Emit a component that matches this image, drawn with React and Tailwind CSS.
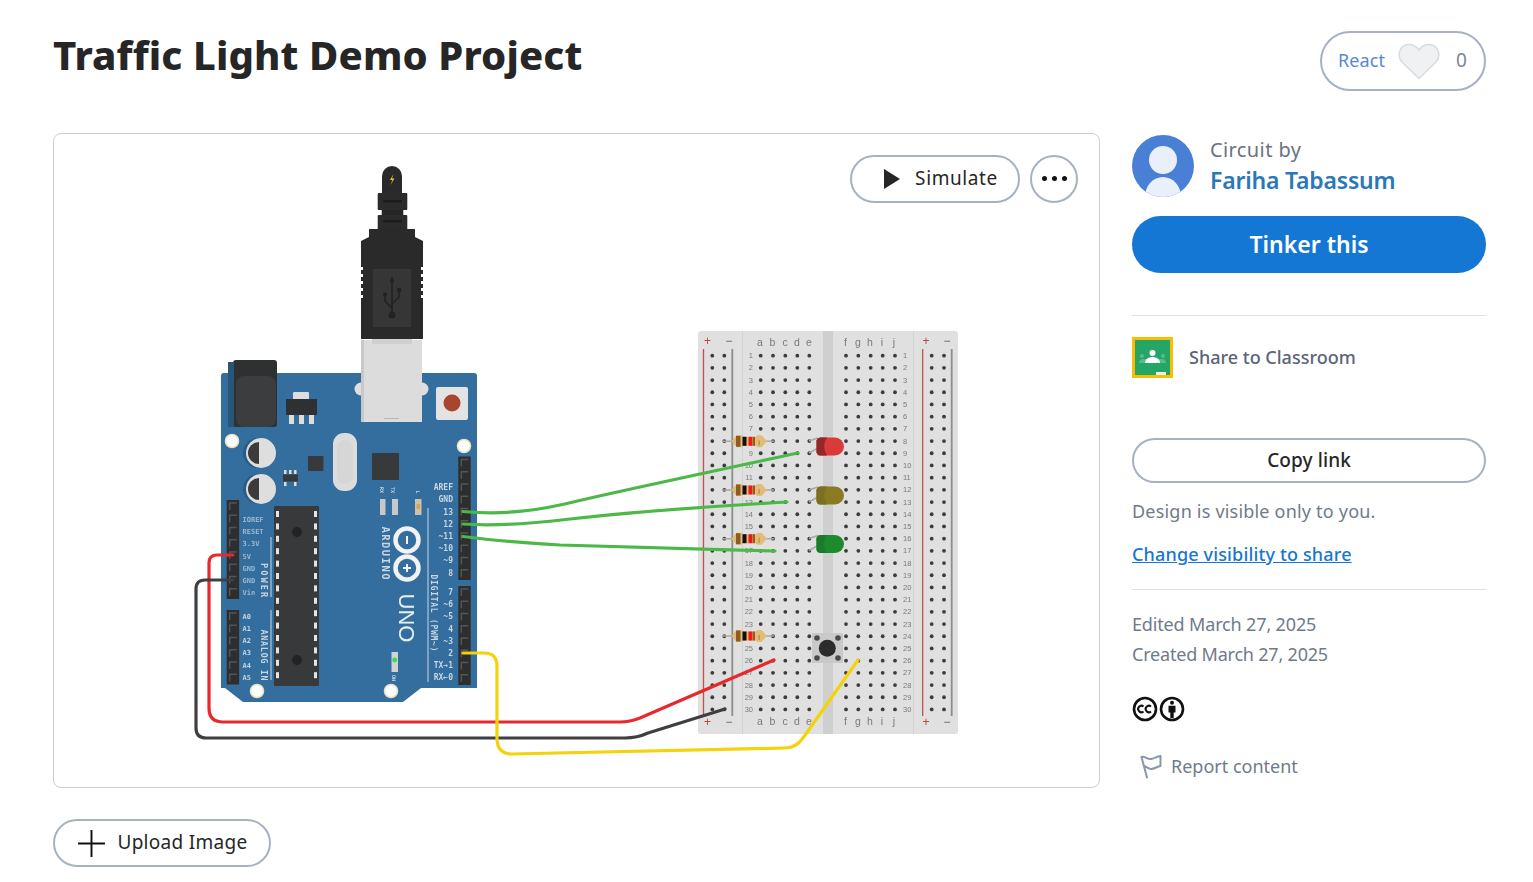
import React from "react";

const rows = Array.from({ length: 30 }, (_, i) => 355.67 + 12.2 * i);
const holeCols = [712.3, 724.3, 760.7, 773, 785.3, 797.3, 809.3, 846, 858.3, 870.7, 882.7, 895, 931.7, 944];

function Resistor({ y }) {
  return (
    <g>
      <path d={`M722 ${y}H774`} stroke="#a8a8a8" strokeWidth="1.6" />
      <path d={`M731.5 ${y}l5-6h5l2 1.500h12l2-1.500h4l5.500 6-5.500 6h-4l-2-1.500h-12l-2 1.500h-5z`} fill="#e2bd78" />
      <rect x="736" y={y - 5.5} width="4.500" height="11" fill="#8f5a24" />
      <rect x="742.5" y={y - 4.5} width="4" height="9" fill="#111" />
      <rect x="748.5" y={y - 4.5} width="4" height="9" fill="#f01818" />
      <rect x="753" y={y - 4.5} width="2" height="9" fill="#8f5a24" />
      <rect x="758.5" y={y - 1} width="1.200" height="5" fill="#a8914a" />
    </g>
  );
}

function Led({ y, color, dark }) {
  return (
    <g>
      <path d={`M809 ${y}l9-3M809 ${y + 12}l9-5`} stroke="#a8a8a8" strokeWidth="1.6" />
      <path d={`M820 ${y - 3.5}h15a9 9 0 0 1 0 18h-15a4 4 0 0 1-3.5-3v-12a4 4 0 0 1 3.5-3z`} fill={color} />
      <path d={`M820 ${y - 3.5}h7a12 14 0 0 0 0 18h-7a4 4 0 0 1-3.5-3v-12a4 4 0 0 1 3.5-3z`} fill={dark} />
    </g>
  );
}

function Pins({ x, y, n }) {
  return (
    <g>
      <rect x={x} y={y} width="12.4" height={n * 12.25 + 1} fill="#2e2e2e" />
      {Array.from({ length: n }, (_, i) => (
        <path key={i} d={`M${x + 3} ${y + 10 + i * 12.25}v-7h7`} fill="none" stroke="#555" strokeWidth="1.4" />
      ))}
    </g>
  );
}

function Cap({ y }) {
  return (
    <g>
      <circle cx="258" cy={y} r="15" fill="#2a5c84" />
      <circle cx="261" cy={y} r="15" fill="#dedede" />
      <path d={`M259 ${y - 11}a11 11 0 0 0 0 22z`} fill="#3b3b3b" />
    </g>
  );
}

function Hole({ x, y }) {
  return <circle cx={x} cy={y} r="6.5" fill="#fff" stroke="#e9e3c0" strokeWidth="1.6" />;
}

const rightLabels = [["AREF", 490], ["GND", 502], ["13", 515], ["12", 527], ["~11", 539], ["~10", 551], ["~9", 563], ["8", 576], ["7", 595], ["~6", 607], ["~5", 619], ["4", 632], ["~3", 644], ["2", 656], ["TX→1", 668], ["RX←0", 680]];
const leftLabels = [["IOREF", 522], ["RESET", 534], ["3.3V", 546], ["5V", 559], ["GND", 571], ["GND", 583], ["Vin", 595], ["A0", 619], ["A1", 631], ["A2", 643], ["A3", 655], ["A4", 668], ["A5", 680]];

function Arduino() {
  return (
    <g>
      <path d="M223 373H474a3 3 0 0 1 3 3V688H421L403 702H243L225 688H221V376a3 3 0 0 1 2-3z" fill="#336e9e" />
      <rect x="233" y="360" width="44" height="67" rx="3" fill="#2f3032" />
      <rect x="228" y="362" width="6" height="65" fill="#285679" />
      <rect x="236" y="376" width="40" height="51" rx="8" fill="#3c3d3f" />
      <rect x="293" y="392" width="16" height="8" rx="1" fill="#ddd" />
      <rect x="286" y="399" width="31" height="16" fill="#2f3032" />
      <rect x="289" y="415" width="5" height="9" fill="#ddd" />
      <rect x="299" y="415" width="5" height="9" fill="#ddd" />
      <rect x="309" y="415" width="5" height="9" fill="#ddd" />
      <circle cx="361" cy="389" r="6.5" fill="#dedede" />
      <circle cx="422" cy="389" r="6.5" fill="#dedede" />
      <rect x="436" y="387" width="32" height="33" rx="2" fill="#e3e3e3" />
      <circle cx="452" cy="403" r="8.5" fill="#a8452e" />
      <Hole x={232} y={441} />
      <Hole x={464} y={446} />
      <Hole x={257} y={691} />
      <Hole x={391} y={691} />
      <Cap y={453} />
      <Cap y={489} />
      <rect x="308" y="456" width="15.5" height="15" rx="1" fill="#38393b" />
      <rect x="333" y="433" width="24" height="58" rx="11" fill="#dcdcdc" />
      <rect x="337" y="440" width="16" height="44" rx="8" fill="#d6d6d6" />
      <rect x="372" y="453" width="27" height="27" rx="1" fill="#38393b" />
      <rect x="283" y="474.5" width="15" height="7" fill="#38393b" />
      {[284, 289, 294].map((x) => <rect key={x} x={x} y="470" width="2.5" height="4" fill="#ddd" />)}
      {[284, 294].map((x) => <rect key={x} x={x} y="482" width="2.5" height="4" fill="#ddd" />)}
      <rect x="380" y="499" width="5.5" height="16" fill="#c8c8c8" />
      <rect x="392" y="499" width="6" height="16" fill="#c8c8c8" />
      <rect x="415" y="499" width="6.5" height="16" fill="#c9c2b0" />
      <rect x="416.5" y="504" width="3.5" height="5" fill="#e0a24a" />
      <Pins x={458.3} y={456.5} n={10} />
      <Pins x={458.3} y={586} n={8} />
      <Pins x={226.7} y={500} n={8} />
      <Pins x={226.7} y={610} n={6} />
      <rect x="274" y="506" width="45" height="180" rx="1" fill="#38393b" />
      {Array.from({ length: 14 }, (_, i) => (
        <g key={i}>
          <rect x="276" y={511 + i * 12.4} width="3" height="6" fill="#e4e4e4" />
          <rect x="314" y={511 + i * 12.4} width="3" height="6" fill="#e4e4e4" />
        </g>
      ))}
      <circle cx="297" cy="532" r="5" fill="#232323" />
      <circle cx="297" cy="660" r="5" fill="#232323" />
      <g fill="#c9d5e0" fontSize="8" fontWeight="600" className="font-['DejaVu_Sans_Mono']">
        {rightLabels.map(([t, y]) => <text key={t} x="453" y={y} textAnchor="end">{t}</text>)}
        {leftLabels.map(([t, y], i) => <text key={t + i} x="242.5" y={y} fontSize="7" fillOpacity={i < 7 ? 0.7 : 1}>{t}</text>)}
        <text transform="translate(261 580) rotate(90)" textAnchor="middle" fontSize="8.5" textLength="34">POWER</text>
        <text transform="translate(261 655) rotate(90)" textAnchor="middle" fontSize="8.5" textLength="51">ANALOG IN</text>
        <text transform="translate(431 613) rotate(90)" textAnchor="middle" fontSize="8" textLength="77">DIGITAL (PWM~)</text>
        <text transform="translate(382 553) rotate(90)" textAnchor="middle" fontSize="10.5" fontWeight="700" textLength="53">ARDUINO</text>
        <text transform="translate(380 490) rotate(90)" textAnchor="middle" fontSize="5">RX</text>
        <text transform="translate(391 490) rotate(90)" textAnchor="middle" fontSize="5">TX</text>
        <text transform="translate(416 492) rotate(90)" textAnchor="middle" fontSize="5">L</text>
        <text transform="translate(392 678) rotate(90)" textAnchor="middle" fontSize="5">ON</text>
      </g>
      <path d="M271 537V597M271 610V680M428 508V682" stroke="#c9d5e0" strokeWidth="1" fill="none" />
      <circle cx="407" cy="540" r="11.5" fill="none" stroke="#f2f2f2" strokeWidth="4.5" />
      <circle cx="407" cy="568" r="11.5" fill="none" stroke="#f2f2f2" strokeWidth="4.5" />
      <path d="M407 536v8M403 568h8M407 564v8" stroke="#f2f2f2" strokeWidth="2" />
      <text transform="translate(399 618) rotate(90)" textAnchor="middle" fontSize="22" fill="#e6edf3" className="font-['Liberation_Sans']">UNO</text>
      <rect x="391.5" y="652" width="6.5" height="20" fill="#cfd3d2" />
      <circle cx="394.7" cy="660" r="2.4" fill="#3fdc4e" />
    </g>
  );
}

function UsbCable() {
  return (
    <g>
      <rect x="361" y="340" width="61" height="82" fill="#dcdcdc" />
      <rect x="361" y="340" width="3" height="82" fill="#c8c8c8" />
      <path d="M372 339H412V344H372z" fill="#cfcfcf" />
      <rect x="384" y="418" width="15" height="1" fill="#b5b5b5" />
      <path d="M382 193V176a10 10 0 0 1 20 0V193z" fill="#2a2a2a" />
      <path d="M393.5 174l-3.5 6h2.5l-2 5 4-6.5h-2.5z" fill="#e2cf2a" />
      <rect x="377.7" y="193" width="29.6" height="17" rx="1" fill="#2b2b2b" />
      <rect x="383" y="200" width="19" height="2.5" rx="1" fill="#1c1c1c" />
      <rect x="381.7" y="210" width="21.6" height="6" fill="#262626" />
      <rect x="377.7" y="215" width="29.6" height="15" rx="1" fill="#2b2b2b" />
      <rect x="383" y="220" width="19" height="2.5" rx="1" fill="#1c1c1c" />
      <path d="M369 229H415V237L423 241V339H361V241L369 237z" fill="#2a2a2a" />
      {[267, 274, 281, 288, 295].map((y) => (
        <g key={y} fill="#fff">
          <rect x="361" y={y} width="2" height="3" />
          <rect x="421" y={y} width="2" height="3" />
        </g>
      ))}
      <rect x="373" y="269" width="38" height="58" fill="#363636" />
      <g stroke="#222" strokeWidth="1.6" fill="none">
        <path d="M392 282V314M392 308l-7-7v-5M392 304l7-7v-5" />
      </g>
      <path d="M392 276l-2.5 6h5z" fill="#222" />
      <circle cx="392" cy="315" r="3.5" fill="#222" />
      <circle cx="385" cy="294.5" r="2" fill="#222" />
      <rect x="397" y="288" width="4" height="4" fill="#222" />
    </g>
  );
}

function Breadboard() {
  const colLabels = [["a", 760], ["b", 772.5], ["c", 785], ["d", 797], ["e", 809], ["f", 845.5], ["g", 858], ["h", 870], ["i", 882], ["j", 894]];
  return (
    <g>
      <rect x="698" y="331" width="260" height="403" rx="3" fill="#e0e0e0" />
      <rect x="742" y="331" width="1" height="403" fill="#d2d2d2" />
      <rect x="913" y="331" width="1" height="403" fill="#d2d2d2" />
      <rect x="823" y="331" width="10" height="403" fill="#cfcfcf" />
      <path d="M703.5 349V716M922.7 349V716" stroke="#c0504d" strokeWidth="1.3" />
      <path d="M732.3 349V716M951.7 349V716" stroke="#8d8d8d" strokeWidth="1.8" />
      {rows.map((y) => holeCols.map((x) => <circle key={x + "-" + y} cx={x} cy={y} r="1.9" fill="#3c3c3c" />))}
      <g fill="#7a7a7a" fontSize="7.5" className="font-['Liberation_Sans']">
        {rows.map((y, i) => (
          <g key={i}>
            <text x="753" y={y + 2.5} textAnchor="end">{i + 1}</text>
            <text x="903" y={y + 2.5}>{i + 1}</text>
          </g>
        ))}
      </g>
      <g fill="#7a7a7a" fontSize="10.5" textAnchor="middle" className="font-['Liberation_Sans']">
        {colLabels.map(([t, x]) => (
          <g key={t}>
            <text x={x} y="346">{t}</text>
            <text x={x} y="725">{t}</text>
          </g>
        ))}
      </g>
      <g fontSize="12" textAnchor="middle" className="font-['Liberation_Sans']">
        {[707.5, 926].map((x) => (
          <g key={x} fill="#c9403c">
            <text x={x} y="345">+</text>
            <text x={x} y="726">+</text>
          </g>
        ))}
        {[729, 947].map((x) => (
          <g key={x} fill="#666">
            <text x={x} y="345">−</text>
            <text x={x} y="726">−</text>
          </g>
        ))}
      </g>
      {[441.3, 490, 538.7, 636].map((y) => <Resistor key={y} y={y} />)}
      <Led y={441} color="#d93a3a" dark="#92282a" />
      <Led y={490} color="#8a7a24" dark="#7d6f20" />
      <Led y={538.5} color="#1d8a2d" dark="#1a7c28" />
      <rect x="812" y="633" width="31" height="30" rx="1" fill="#c9c9c9" />
      {[[817, 638], [838, 638], [817, 658], [838, 658]].map(([x, y]) => <circle key={x + "" + y} cx={x} cy={y} r="2.8" fill="#4a4a4a" />)}
      <circle cx="827.3" cy="648.3" r="8.5" fill="#2c2c2c" />
    </g>
  );
}

function Circuit() {
  return (
    <svg viewBox="54 134 1045 653" className="block w-full h-full blur-[0.5px]">
      <Arduino />
      <UsbCable />
      <Breadboard />
      <g fill="none" strokeWidth="3.2" strokeLinecap="round" strokeLinejoin="round">
        <path d="M463 511.5C490 514 520 514 560 505C610 493 700 474 798 453" stroke="#4cb848" />
        <path d="M463 524C490 526 520 525 570 519C640 511 700 507 787 502" stroke="#4cb848" />
        <path d="M463 536.5C490 540 510 542 560 545C620 547 700 549 775 551" stroke="#4cb848" />
        <path d="M233 555H217Q209 555 209 563V708Q209 722 223 722H620Q630 722 640 718L774 660" stroke="#e8282c" />
        <path d="M233 580H205Q196 580 196 589V728Q196 738 206 738H625Q637 738 648 733L725 709" stroke="#3f3f3f" />
        <path d="M463 653H484Q497 653 497 666V738Q497 754 512 754L785 748Q796 748 803 738L858 660" stroke="#f4d20c" />
      </g>
    </svg>
  );
}

function PillButton({ className, children }) {
  return <button className={"flex items-center justify-center rounded-full border-2 border-[#a6b2c1] bg-white " + className}>{children}</button>;
}

function ClassroomIcon() {
  return (
    <svg viewBox="0 0 41 41" className="w-[41px] h-[41px] shrink-0">
      <rect width="41" height="41" fill="#fbbc04" />
      <rect x="3" y="3" width="35" height="35" fill="#25a667" />
      <g fill="#57bb8a">
        <circle cx="10" cy="19" r="2" />
        <circle cx="31" cy="19" r="2" />
        <path d="M7 26c0-3 2-4 4-4h19c2 0 4 1 4 4z" />
      </g>
      <circle cx="20.5" cy="16" r="3" fill="#fff" />
      <path d="M13 26c0-4 4-6 7.5-6s7.5 2 7.5 6z" fill="#fff" />
      <rect x="24" y="35" width="10" height="3" fill="#f1f1f1" />
    </svg>
  );
}

function Avatar() {
  return (
    <svg viewBox="0 0 62 62" className="w-[62px] h-[62px] shrink-0">
      <clipPath id="av"><circle cx="31" cy="31" r="31" /></clipPath>
      <g clipPath="url(#av)">
        <rect width="62" height="62" fill="#4a7fd6" />
        <circle cx="31" cy="25" r="14" fill="#e9f0fb" />
        <ellipse cx="31" cy="62" rx="18" ry="20" fill="#e9f0fb" />
      </g>
    </svg>
  );
}

function CcIcons() {
  return (
    <div className="flex gap-[1px]">
      <svg viewBox="0 0 26 26" className="w-[26px] h-[26px]">
        <circle cx="13" cy="13" r="11" fill="#fff" stroke="#111" strokeWidth="2.6" />
        <path d="M11.5 10.6a3.2 3.2 0 1 0 0 4.8M19 10.6a3.2 3.2 0 1 0 0 4.8" fill="none" stroke="#111" strokeWidth="2" />
      </svg>
      <svg viewBox="0 0 26 26" className="w-[26px] h-[26px]">
        <circle cx="13" cy="13" r="11" fill="#fff" stroke="#111" strokeWidth="2.6" />
        <circle cx="13" cy="6.8" r="2" fill="#111" />
        <path d="M9.500 9.800h7v6.600h-1.800V22h-3.400v-5.600H9.500z" fill="#111" />
      </svg>
    </div>
  );
}

export default function App() {
  return (
    <div className="h-[882px] overflow-hidden bg-white pl-[53px] pr-[47px] pt-[31px] font-['Noto_Sans',sans-serif]">
      <header className="flex justify-between items-start h-[102px]">
        <h1 className="text-[40px] leading-[48px] font-extrabold tracking-[0.12px] text-[#262626]">Traffic Light Demo Project</h1>
        <button className="w-[166px] h-[60px] rounded-full border-2 border-[#a6b2c1] flex items-center pl-[16px] pb-[2px]">
          <span className="text-[18px] tracking-[0.1px] text-[#5b86d6] w-[60px] text-left">React</span>
          <svg viewBox="0 0 42 37" className="w-[42px] h-[37px] mt-[2px]">
            <path d="M21 35.500L3.500 18.500C-1.500 12 2 2 10.500 1.500c4.500-.2 8 2 10.500 5.500 2.500-3.500 6-5.700 10.500-5.500C40 2 43.500 12 38.500 18.500z" fill="#f0f1f3" stroke="#d8dbdf" strokeWidth="1.500" />
          </svg>
          <span className="text-[19px] text-[#7b8794] ml-[16px]">0</span>
        </button>
      </header>
      <div className="grid grid-cols-[1047px_354px] gap-x-[32px]">
        <main>
          <div className="relative h-[655px] rounded-lg border border-[#c9ced6]">
            <Circuit />
            <div className="absolute top-[21px] right-[21px] flex gap-[10px]">
              <PillButton className="w-[170px] h-[48px] pl-[10px] pb-[2px]">
                <svg viewBox="0 0 16 20" className="w-[16px] h-[20px] mr-[15px] ml-[2px] mt-[2px]"><path d="M0 0L16 10L0 20z" fill="#262626" /></svg>
                <span className="text-[19px] tracking-[0.6px] text-[#262626]">Simulate</span>
              </PillButton>
              <PillButton className="w-[48px] h-[48px] gap-[5px] pb-[2px]">
                <span className="w-[5px] h-[5px] rounded-full bg-[#111]" />
                <span className="w-[5px] h-[5px] rounded-full bg-[#111]" />
                <span className="w-[5px] h-[5px] rounded-full bg-[#111]" />
              </PillButton>
            </div>
          </div>
          <PillButton className="mt-[31px] w-[218px] h-[48px] pl-[2px] pb-[2px]">
            <svg viewBox="0 0 28 28" className="w-[27px] h-[27px] mr-[12px] mt-[2px]"><path d="M14 0V28M0 14H28" stroke="#111" strokeWidth="2" /></svg>
            <span className="text-[19px] tracking-[0.3px] text-[#262626]">Upload Image</span>
          </PillButton>
        </main>
        <aside className="pt-[2px]">
          <div className="flex items-center gap-[16px] h-[62px]">
            <Avatar />
            <div className="-mt-[1px]">
              <div className="text-[20px] leading-[29px] tracking-[0.4px] text-[#6a7280]">Circuit by</div>
              <div className="text-[23px] leading-[32px] tracking-[-0.2px] font-semibold text-[#2b78b8]">Fariha Tabassum</div>
            </div>
          </div>
          <button className="mt-[19px] w-full h-[57px] rounded-full bg-[#1477d4] text-white text-[23px] font-semibold">Tinker this</button>
          <div className="mt-[42px] border-t border-[#dcdfe4]" />
          <div className="mt-[21px] flex items-center gap-[16px]">
            <ClassroomIcon />
            <span className="text-[18px] font-medium text-[#5a6478]">Share to Classroom</span>
          </div>
          <button className="mt-[60px] w-full h-[45px] rounded-full border-2 border-[#a6b2c1] text-[19px] font-medium text-[#262626] tracking-[0.1px]">Copy link</button>
          <p className="mt-[14px] text-[18px] leading-[28px] tracking-[0.2px] text-[#6f7a8a]">Design is visible only to you.</p>
          <a className="block mt-[15px] text-[18px] leading-[28px] tracking-[0.15px] font-medium text-[#1477d4] underline">Change visibility to share</a>
          <div className="mt-[21px] border-t border-[#dcdfe4]" />
          <p className="mt-[19px] text-[18px] leading-[30px] tracking-[-0.15px] text-[#6f7a8a]">Edited March 27, 2025</p>
          <p className="text-[18px] leading-[30px] tracking-[-0.2px] text-[#6f7a8a]">Created March 27, 2025</p>
          <div className="mt-[27px]"><CcIcons /></div>
          <div className="mt-[31px] ml-[8px] flex items-center gap-[9px]">
            <svg viewBox="0 0 22 24" className="w-[22px] h-[24px]">
              <path d="M7 22.500L1.500 2C5 1 7 4.500 11 4C14 3.500 17 1.500 20.500 1V11C17 11.500 14.500 14 11 14C8 14 6.500 11.500 4 11" fill="none" stroke="#8a97aa" strokeWidth="2" strokeLinejoin="round" strokeLinecap="round" />
            </svg>
            <span className="text-[18px] text-[#6f7a8a]">Report content</span>
          </div>
        </aside>
      </div>
    </div>
  );
}
